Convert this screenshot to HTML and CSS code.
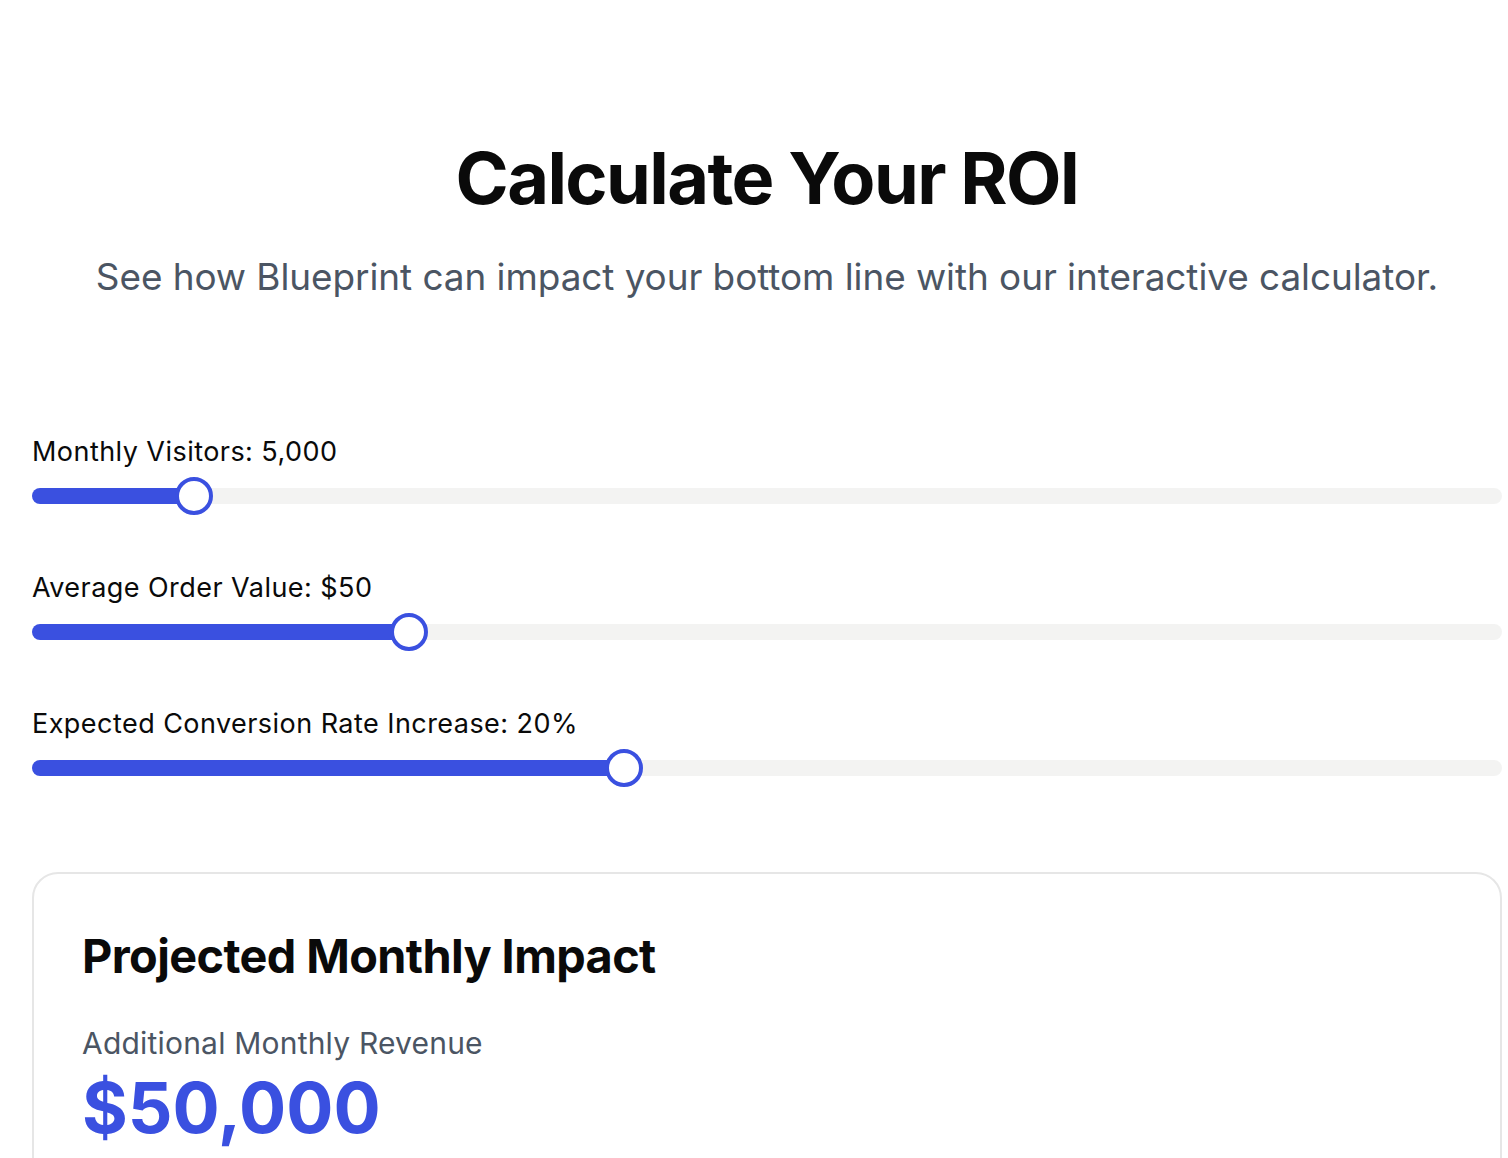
FILE: index.html
```html
<!DOCTYPE html>
<html lang="en">
<head>
<meta charset="utf-8">
<title>Calculate Your ROI</title>
<link rel="stylesheet" href="styles.css">
</head>
<body>
<main class="page">
  <header class="intro">
    <h1 class="title">Calculate Your ROI</h1>
    <p class="subtitle">See how Blueprint can impact your bottom line with our interactive calculator.</p>
  </header>
  <section class="controls">
    <div class="control">
      <label class="control-label" for="visitors">Monthly Visitors: 5,000</label>
      <input class="range" id="visitors" type="range" min="0" max="100" value="10" style="--p:0.10">
    </div>
    <div class="control">
      <label class="control-label" for="aov">Average Order Value: $50</label>
      <input class="range" id="aov" type="range" min="0" max="100" value="25" style="--p:0.25">
    </div>
    <div class="control">
      <label class="control-label" for="conv">Expected Conversion Rate Increase: 20%</label>
      <input class="range" id="conv" type="range" min="0" max="100" value="40" style="--p:0.40">
    </div>
  </section>
  <section class="card">
    <h2 class="card-title">Projected Monthly Impact</h2>
    <p class="metric-label">Additional Monthly Revenue</p>
    <p class="metric-value">$50,000</p>
  </section>
</main>
</body>
</html>
```

FILE: styles.css
```css
* { box-sizing: border-box; }
html, body { margin: 0; padding: 0; background: #ffffff; }
body {
  font-family: Inter, "Liberation Sans", sans-serif;
  color: #0a0a0a;
}
.page {
  width: 1470px;
  margin-left: 32px;
  padding-top: 136px;
}
.intro { text-align: center; }
.title {
  margin: 0;
  font-size: 72px;
  line-height: 84px;
  font-weight: 700;
  letter-spacing: -1.6px;
  color: #0a0a0a;
}
.subtitle {
  margin: 33px 0 0;
  font-size: 36.9px;
  line-height: 48px;
  font-weight: 400;
  letter-spacing: -0.05px;
  color: #4b5563;
}
.controls {
  margin-top: 135px;
  display: flex;
  flex-direction: column;
  gap: 68px;
}
.control {
  display: flex;
  flex-direction: column;
  gap: 20px;
}
.control-label {
  font-size: 27px;
  line-height: 32px;
  font-weight: 400;
  letter-spacing: 0.45px;
  color: #0a0a0a;
}
.range {
  -webkit-appearance: none;
  appearance: none;
  margin: 0;
  width: 100%;
  height: 16px;
  border-radius: 8px;
  background: linear-gradient(to right, #3a50e0 calc(19px + var(--p) * (100% - 38px)), #f3f3f2 0);
  outline: none;
}
.range::-webkit-slider-thumb {
  -webkit-appearance: none;
  appearance: none;
  width: 38px;
  height: 38px;
  border-radius: 50%;
  background: #ffffff;
  border: 4px solid #3a50e0;
  cursor: pointer;
}
.card {
  margin-top: 96px;
  border: 2px solid #e6e6e6;
  border-radius: 26px;
  padding: 54px 48px 40px;
}
.card-title {
  margin: 0;
  font-size: 46.8px;
  line-height: 56px;
  font-weight: 700;
  letter-spacing: -0.6px;
}
.metric-label {
  margin: 41px 0 0;
  font-size: 30px;
  line-height: 36px;
  letter-spacing: 0.2px;
  color: #4b5563;
}
.metric-value {
  margin: 7px 0 0;
  font-size: 70px;
  line-height: 80px;
  font-weight: 700;
  color: #3a50e0;
}
```
